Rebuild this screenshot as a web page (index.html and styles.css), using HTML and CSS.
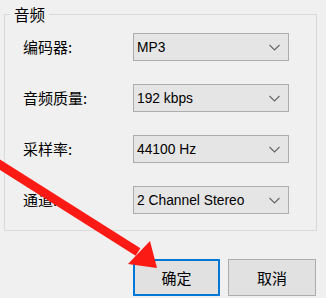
FILE: index.html
```html
<!DOCTYPE html>
<html>
<head>
    <meta charset="utf-8" />
    <title>音频设置</title>
    <link rel="stylesheet" href="styles.css">
</head>
<body>

<div class="dlg">
    <fieldset class="group">
        <legend>音频</legend>
        <div class="rows">
            <label>编码器:</label>
            <div class="combo"><span>MP3</span><svg width="11" height="7" viewBox="0 0 11 7"><path d="M0.5 1 L5.5 6 L10.5 1" /></svg></div>

            <label>音频质量:</label>
            <div class="combo"><span>192 kbps</span><svg width="11" height="7" viewBox="0 0 11 7"><path d="M0.5 1 L5.5 6 L10.5 1" /></svg></div>

            <label>采样率:</label>
            <div class="combo"><span>44100 Hz</span><svg width="11" height="7" viewBox="0 0 11 7"><path d="M0.5 1 L5.5 6 L10.5 1" /></svg></div>

            <label>通道:</label>
            <div class="combo"><span>2 Channel Stereo</span><svg width="11" height="7" viewBox="0 0 11 7"><path d="M0.5 1 L5.5 6 L10.5 1" /></svg></div>
        </div>
    </fieldset>

    <div class="btns">
        <button class="btn default">确定</button>
        <button class="btn">取消</button>
    </div>
</div>

<!-- red arrow drawn over the dialog -->
<svg class="arrow" width="326" height="298" viewBox="0 0 326 298">
    <line x1="-6" y1="161" x2="138" y2="252" stroke="#fb1a14" stroke-width="9" />
    <polygon points="128,264 150,241 157,268" fill="#fb1a14" />
</svg>

</body>
</html>
```

FILE: styles.css
```css
* { box-sizing: border-box; }
body { margin: 0; background: #f0f0f0; font-family: "Noto Sans CJK SC", "Noto Sans", sans-serif; font-size: 15px; color: #000; }

.dlg { width: 326px; height: 298px; padding-top: 4px; position: relative; }

.group { margin: 0 9px 0 4px; padding: 9px 0 16px 5px; border: 1px solid #d9d9d9; min-width: 0; }
.group legend { padding: 0 4px; line-height: 20px; font-size: 15.5px; }

.rows { display: grid; grid-template-columns: 123px 156px; row-gap: 23px; align-items: center; }
.rows label { padding-left: 13px; line-height: 20px; }

.combo { height: 28px; display: flex; align-items: center; justify-content: space-between; padding: 0 8px 0 3px; background: #e5e5e5; border: 1px solid #adadad; font-family: "Liberation Sans", Arial, sans-serif; font-size: 13.8px; }
.combo svg { fill: none; stroke: #666; stroke-width: 1.1; }

.btns { display: flex; justify-content: flex-end; gap: 8px; margin: 28px 10px 0 0; }
.btn { width: 88px; height: 37px; background: #e1e1e1; border: 1px solid #adadad; font-family: "Noto Sans CJK SC", sans-serif; font-size: 15px; color: #000; padding: 0; }
.btn.default { border: 2px solid #0078d7; width: 87px; }

.arrow { position: absolute; left: 0; top: 0; pointer-events: none; }
```
